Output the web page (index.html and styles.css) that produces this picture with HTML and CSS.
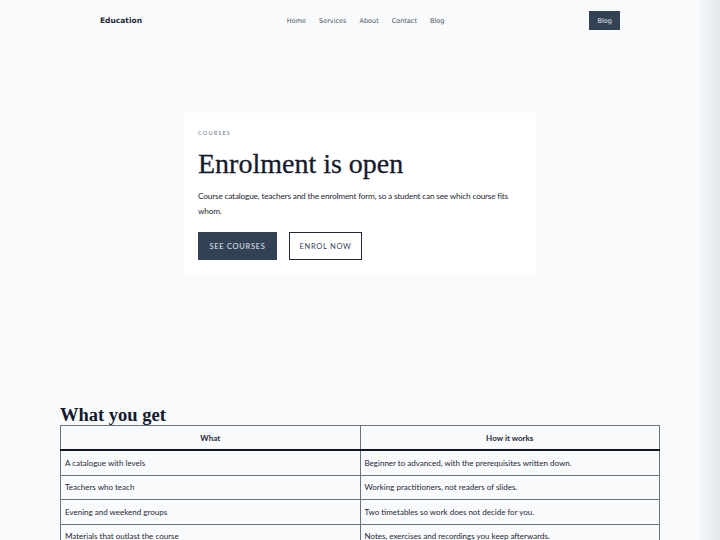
FILE: index.html
```html
<!DOCTYPE html>
<html lang="en">
<head>
<meta charset="utf-8">
<title>Education</title>
<link rel="stylesheet" href="styles.css">
</head>
<body>
<div class="page">
  <header class="nav">
    <div class="brand">Education</div>
    <nav class="links">
      <a class="link" href="#">Home</a>
      <a class="link" href="#">Services</a>
      <a class="link" href="#">About</a>
      <a class="link" href="#">Contact</a>
      <a class="link" href="#">Blog</a>
    </nav>
    <a class="nav-btn" href="#">Blog</a>
  </header>

  <section class="hero">
    <div class="card">
      <div class="eyebrow">COURSES</div>
      <h1 class="title">Enrolment is open</h1>
      <p class="lead">Course catalogue, teachers and the enrolment form, so a student can see which course fits whom.</p>
      <div class="actions">
        <a class="btn btn-solid" href="#">SEE COURSES</a>
        <a class="btn btn-outline" href="#">ENROL NOW</a>
      </div>
    </div>
  </section>

  <section class="features">
    <h2 class="section-title">What you get</h2>
    <table class="grid">
      <thead>
        <tr><th>What</th><th>How it works</th></tr>
      </thead>
      <tbody>
        <tr><td>A catalogue with levels</td><td>Beginner to advanced, with the prerequisites written down.</td></tr>
        <tr><td>Teachers who teach</td><td>Working practitioners, not readers of slides.</td></tr>
        <tr><td>Evening and weekend groups</td><td>Two timetables so work does not decide for you.</td></tr>
        <tr><td>Materials that outlast the course</td><td>Notes, exercises and recordings you keep afterwards.</td></tr>
      </tbody>
    </table>
  </section>
</div>
<div class="edge"></div>
</body>
</html>
```
FILE: styles.css
```css
html, body {
  margin: 0;
  padding: 0;
}
body {
  background: #f8fafc;
  font-family: "Lato", "Liberation Sans", sans-serif;
  color: #1e293b;
}
.page {
  width: 720px;
}
.edge {
  position: fixed;
  top: 0;
  right: 0;
  width: 22px;
  height: 100%;
  background: linear-gradient(to right, rgba(200, 204, 210, 0), rgba(200, 204, 210, 0.45));
  pointer-events: none;
}
a {
  text-decoration: none;
  color: inherit;
}
.nav {
  width: 520px;
  margin: 0 auto;
  height: 41px;
  display: flex;
  align-items: center;
  justify-content: space-between;
}
.brand {
  font-family: "DejaVu Sans", sans-serif;
  font-weight: bold;
  font-size: 7.5px;
  color: #1f2937;
  width: 189px;
}
.links {
  display: flex;
  gap: 13px;
  font-family: "DejaVu Sans", sans-serif;
  font-size: 6.5px;
}
.link {
  color: #4b5563;
}
.nav-btn {
  font-family: "DejaVu Sans", sans-serif;
  font-size: 6.5px;
  background: #334155;
  color: #e2e8f0;
  width: 31px;
  height: 19px;
  display: flex;
  align-items: center;
  justify-content: center;
  margin-left: 145px;
}
.hero {
  padding: 72px 0 130px;
  display: flex;
  justify-content: center;
}
.card {
  width: 324px;
  background: #ffffff;
  padding: 16px 14px 15px;
}
.eyebrow {
  font-size: 5.5px;
  line-height: 8px;
  letter-spacing: 1.2px;
  color: #64748b;
}
.title {
  font-family: "Liberation Serif", serif;
  font-weight: normal;
  font-size: 28px;
  color: #141a2e;
  margin: 10px 0 0;
  line-height: 34px;
  -webkit-text-stroke: 0.3px #141a2e;
}
.lead {
  font-size: 8.3px;
  letter-spacing: -0.2px;
  line-height: 15px;
  margin: 8px 0 0;
  color: #1f2937;
}
.actions {
  display: flex;
  gap: 12px;
  margin-top: 13px;
}
.btn {
  height: 28px;
  box-sizing: border-box;
  display: flex;
  align-items: center;
  justify-content: center;
  font-size: 7.5px;
  letter-spacing: 0.7px;
}
.btn-solid {
  width: 79px;
  background: #334155;
  color: #e2e8f0;
}
.btn-outline {
  width: 73px;
  background: #ffffff;
  border: 1px solid #1f2937;
  color: #334155;
}
.features {
  width: 600px;
  margin: 0 auto;
}
.section-title {
  font-family: "Liberation Serif", serif;
  font-weight: bold;
  font-size: 18.5px;
  color: #141a2e;
  margin: 0;
  line-height: 20px;
}
.grid {
  width: 600px;
  border-collapse: collapse;
  font-size: 8px;
  color: #1f2937;
}
.grid th, .grid td {
  border: 1px solid #6b7280;
  width: 50%;
}
.grid th {
  height: 23px;
  font-weight: bold;
  border-bottom: 2px solid #111827;
  padding: 0;
}
.grid td {
  height: 23.5px;
  padding: 0 4px;
  text-align: left;
}
```
